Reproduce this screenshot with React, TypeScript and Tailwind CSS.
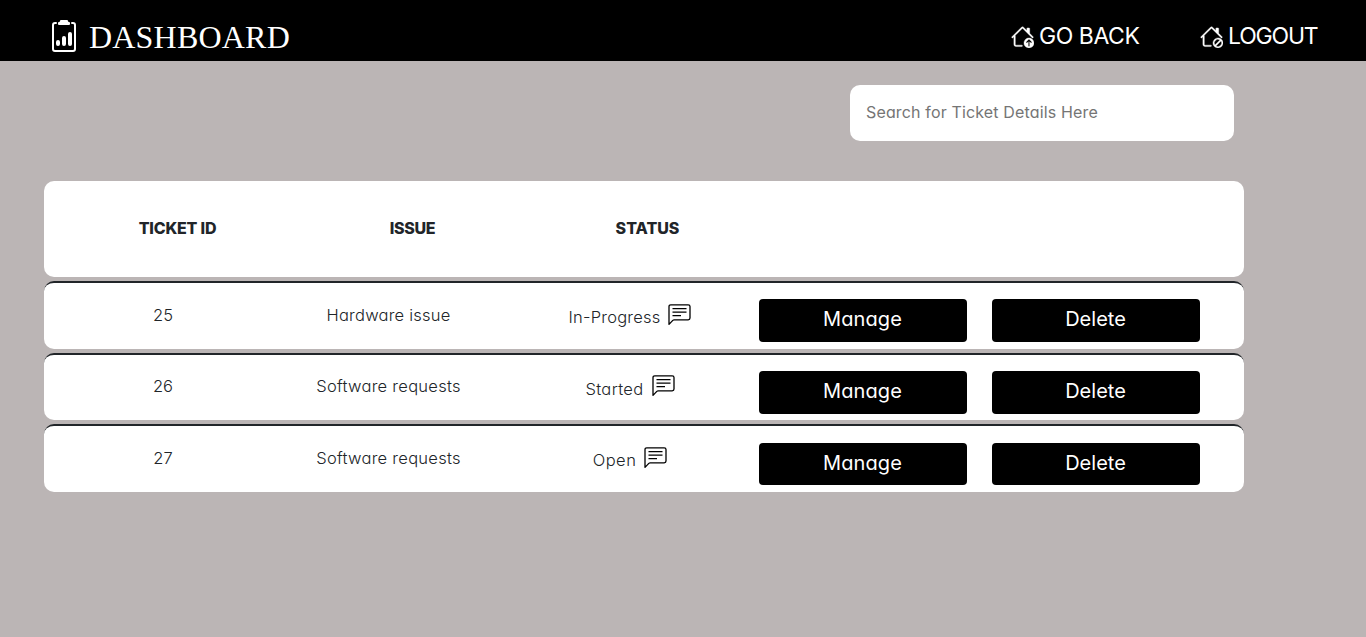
import React from "react";
import { BsClipboard2Data, BsHouseUp, BsHouseSlash } from "react-icons/bs";

const tickets = [
  { id: "25", issue: "Hardware issue", issueCls: "tracking-[0.22px]", status: "In-Progress", statusCls: "tracking-[0.22px]", card: "h-[68px]", cell: "pt-5", icon: "mt-px", btn: "mt-4 h-[43px]" },
  { id: "26", issue: "Software requests", issueCls: "tracking-[0.27px]", status: "Started", statusCls: "tracking-[0.35px]", card: "h-[67px]", cell: "pt-[19px]", icon: "", btn: "mt-4 h-[43px]" },
  { id: "27", issue: "Software requests", issueCls: "tracking-[0.27px]", status: "Open", statusCls: "tracking-[0.5px]", card: "h-[68px]", cell: "pt-5", icon: "mt-px", btn: "mt-[17px] h-[42px]" },
];

function ChatIcon({ className }: { className: string }) {
  return (
    <svg viewBox="0 0 23 22" fill="none" stroke="currentColor" strokeWidth="1.3" strokeLinejoin="round" className={`h-[22px] w-[23px] text-black ${className}`}>
      <path d="M1 20.4V2.6Q1 .8 2.8 .8H20.2Q22 .8 22 2.6V14Q22 15.8 20.2 15.8H6.2Q5.4 15.8 4.8 16.4Z" />
      <path d="M4.5 4.7H18.5M4.5 8.2H18.5M4.5 11.7H13" />
    </svg>
  );
}

export default function App() {
  return (
    <div className="min-h-[637px] bg-[#bbb5b5] font-['Inter',sans-serif] text-[#212529] [font-feature-settings:'cv11']">
      <header className="flex h-[61px] items-start bg-black px-12 text-white">
        <BsClipboard2Data className="mt-5 size-8" />
        <h1 className="ml-[9px] mt-[21px] font-['Liberation_Serif',serif] text-[32px] leading-none tracking-[0.2px]">DASHBOARD</h1>
        <nav className="ml-auto flex gap-[60px] pt-[25px] text-[23px] leading-none">
          <a className="flex items-start gap-[5px]"><BsHouseUp strokeWidth={0.25} className="size-[23px]" /><span className="w-[101px] whitespace-nowrap tracking-[-0.45px]">GO BACK</span></a>
          <a className="flex items-start gap-[5px]"><BsHouseSlash strokeWidth={0.25} className="size-[23px]" /><span className="w-[90px] whitespace-nowrap tracking-[-1.2px]">LOGOUT</span></a>
        </nav>
      </header>
      <main className="pl-11 pt-6">
        <input
          type="text"
          placeholder="Search for Ticket Details Here"
          className="ml-[806px] block h-14 w-96 rounded-[10px] bg-white px-4 pb-0.5 tracking-[0.15px] outline-none placeholder:text-[#757575]"
        />
        <section className="mt-10 flex w-[1200px] flex-col gap-1">
          <div className="grid h-24 grid-cols-[235px_235px_235px] items-center rounded-[10px] bg-white pb-0.5 pl-4 text-center font-extrabold">
            <span className="tracking-[-0.2px]">TICKET ID</span>
            <span className="tracking-[-0.3px]">ISSUE</span>
            <span>STATUS</span>
          </div>
          {tickets.map((t) => (
            <div key={t.id} className={`grid grid-cols-[232px_225px_258px_208px_208px] rounded-[10px] border-t-2 border-[#212529] bg-white text-center text-[16.5px] leading-6 font-light ${t.card}`}>
              <div className={`pl-1.5 ${t.cell}`}>{t.id}</div>
              <div className={`${t.cell} ${t.issueCls}`}>{t.issue}</div>
              <div className="flex items-start justify-center gap-2 pt-5">
                <span className={`pt-0.5 ${t.statusCls}`}>{t.status}</span>
                <ChatIcon className={t.icon} />
              </div>
              <button className={`rounded bg-black pb-[3px] pr-px text-xl font-normal tracking-[0.1px] text-white ${t.btn}`}>Manage</button>
              <button className={`ml-[25px] mr-[-25px] rounded bg-black pb-[3px] pr-px text-xl font-normal text-white ${t.btn}`}>Delete</button>
            </div>
          ))}
        </section>
      </main>
    </div>
  );
}
